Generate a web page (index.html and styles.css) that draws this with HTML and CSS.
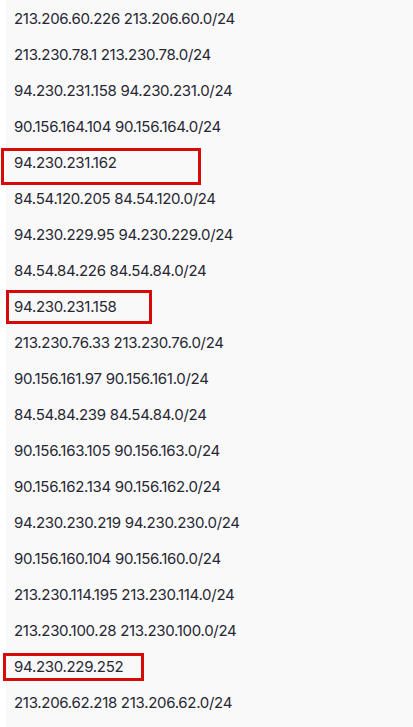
FILE: index.html
```html
<!DOCTYPE html>
<html>
<head>
<meta charset="utf-8">
<link rel="stylesheet" href="styles.css">
</head>
<body>
<div class="panel">
  <ul class="ip-list">
    <li class="row">213.206.60.226 213.206.60.0/24</li>
    <li class="row">213.230.78.1 213.230.78.0/24</li>
    <li class="row">94.230.231.158 94.230.231.0/24</li>
    <li class="row">90.156.164.104 90.156.164.0/24</li>
    <li class="row marked"><span class="mark mark-a"></span>94.230.231.162</li>
    <li class="row">84.54.120.205 84.54.120.0/24</li>
    <li class="row">94.230.229.95 94.230.229.0/24</li>
    <li class="row">84.54.84.226 84.54.84.0/24</li>
    <li class="row marked"><span class="mark mark-b"></span>94.230.231.158</li>
    <li class="row">213.230.76.33 213.230.76.0/24</li>
    <li class="row">90.156.161.97 90.156.161.0/24</li>
    <li class="row">84.54.84.239 84.54.84.0/24</li>
    <li class="row">90.156.163.105 90.156.163.0/24</li>
    <li class="row">90.156.162.134 90.156.162.0/24</li>
    <li class="row">94.230.230.219 94.230.230.0/24</li>
    <li class="row">90.156.160.104 90.156.160.0/24</li>
    <li class="row">213.230.114.195 213.230.114.0/24</li>
    <li class="row">213.230.100.28 213.230.100.0/24</li>
    <li class="row marked"><span class="mark mark-c"></span>94.230.229.252</li>
    <li class="row">213.206.62.218 213.206.62.0/24</li>
  </ul>
</div>
</body>
</html>
```
FILE: styles.css
```css
html, body {
  margin: 0;
  padding: 0;
  background: #ffffff;
}
.panel {
  margin-left: 6px;
  background: #f9f9f9;
  min-height: 727px;
}
.ip-list {
  list-style: none;
  margin: 0;
  padding: 0 0 0 8px;
}
.row {
  height: 36px;
  display: flex;
  align-items: center;
  font-family: Inter, "Noto Sans", sans-serif;
  font-size: 15px;
  color: #262732;
  letter-spacing: -0.3px;
}
.marked {
  position: relative;
}
.mark {
  position: absolute;
  border: 3.5px solid #d70a0a;
  box-sizing: border-box;
}
.mark-a {
  left: -13px;
  top: 4px;
  width: 200px;
  height: 37px;
}
.mark-b {
  left: -8px;
  top: 2px;
  width: 146px;
  height: 34px;
}
.mark-c {
  left: -11px;
  top: 5px;
  width: 141px;
  height: 28px;
}
```
